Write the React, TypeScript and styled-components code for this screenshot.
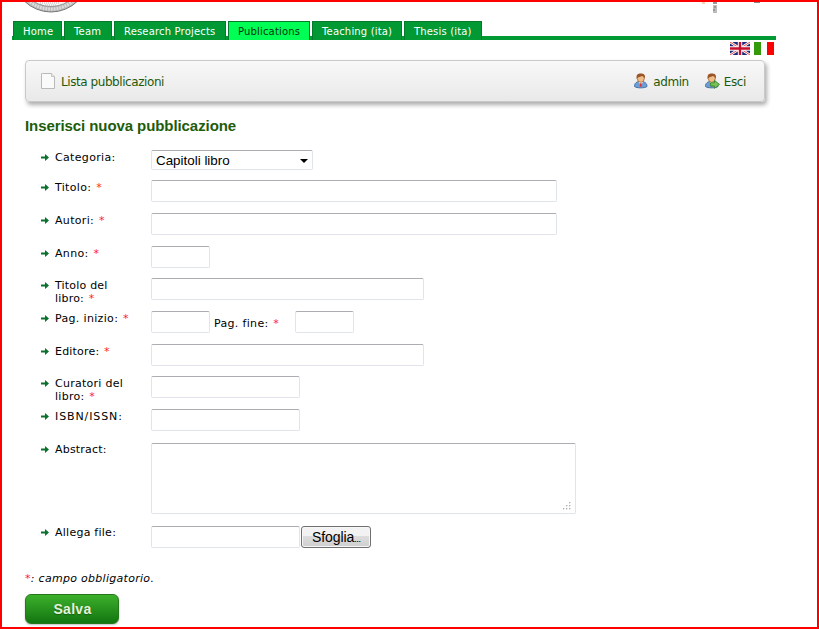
import React from "react";
import styled, { createGlobalStyle } from "styled-components";

const Global = createGlobalStyle`
  *, *::before, *::after { box-sizing: border-box; }
  body { margin: 0; background: #fff; }
`;

const Page = styled.div`
  width: 819px;
  height: 629px;
  border: 2px solid #f00;
  overflow: hidden;
  font: 11px/13px "DejaVu Sans", Verdana, sans-serif;
  color: #000;
  display: flex;
  flex-direction: column;
`;

const Header = styled.header`
  height: 19px;
  flex: none;
  display: flex;
  justify-content: space-between;
  padding: 0 53px 0 20px;
  svg { display: block; }
`;

const TabBar = styled.nav`
  height: 19px;
  width: 764px;
  flex: none;
  margin-left: 10px;
  padding-left: 1px;
  display: flex;
  gap: 2px;
  background: linear-gradient(#093, #093) bottom / 100% 4px no-repeat;
`;

const Tab = styled.a<{ $w: number; $active?: boolean }>`
  width: ${(p) => p.$w}px;
  height: 19px;
  padding: 3px 0 0 9px;
  white-space: nowrap;
  border: 1px solid #067a2b;
  border-bottom: 0;
  background: ${(p) => (p.$active ? "#00ff55" : "#009933")};
  color: ${(p) => (p.$active ? "#003311" : "#fff")};
  font-size: 10px;
  letter-spacing: 0.17px;
`;

const Flags = styled.div`
  height: 20px;
  flex: none;
  display: flex;
  gap: 4px;
  padding: 2px 0 0 728px;
  svg { display: block; }
`;

const Toolbar = styled.div`
  width: 740px;
  height: 42px;
  flex: none;
  margin-left: 23px;
  padding: 1px 18px 0 15px;
  display: flex;
  align-items: center;
  border: 1px solid #c9c9c9;
  border-radius: 4px;
  background: linear-gradient(#f8f8f8, #e9e9e9);
  box-shadow: 2px 3px 4px rgba(0, 0, 0, 0.32);
`;

const ToolLink = styled.a<{ $gap: number; $ls: number; $end?: number }>`
  display: flex;
  align-items: center;
  gap: ${(p) => p.$gap}px;
  margin-right: ${(p) => p.$end ?? 0}px;
  color: #1f5a0c;
  font-size: 12px;
  line-height: 16px;
  letter-spacing: ${(p) => p.$ls}px;
  white-space: nowrap;
  svg { margin-bottom: 2px; }
`;

const Spacer = styled.span`
  flex: 1;
`;

const Title = styled.h1`
  margin: 14px 0 0 23px;
  height: 34px;
  flex: none;
  color: #1d5c0b;
  font: bold 15px/20px "Liberation Sans", Arial, sans-serif;
  letter-spacing: -0.08px;
`;

const Form = styled.form`
  display: flex;
  flex-direction: column;
  padding-left: 38px;
`;

const Row = styled.div<{ $h: number }>`
  height: ${(p) => p.$h}px;
  display: grid;
  grid-template-columns: 15px 96px 1fr;
  align-items: start;
`;

const Arrow = styled.svg<{ $top: number }>`
  display: block;
  margin: ${(p) => p.$top + 3}px 0 0 1px;
`;

const Label = styled.label<{ $top: number; $ls: number }>`
  width: 80px;
  padding-top: ${(p) => p.$top}px;
  letter-spacing: ${(p) => p.$ls}px;
`;

const Star = styled.span`
  color: #f22;
  margin-left: 1px;
`;

const Fields = styled.div`
  display: flex;
`;

const edge = `
  border: 1px solid #e1e4eb;
  border-top-color: #abadb3;
  border-radius: 2px;
  background: #fff;
  padding: 0 4px;
  outline: none;
`;

const Input = styled.input<{ $w: number }>`
  ${edge}
  width: ${(p) => p.$w}px;
  height: 22px;
`;

const Select = styled.div`
  ${edge}
  width: 162px;
  height: 20px;
  display: flex;
  align-items: center;
  justify-content: space-between;
  font: 13.4px/18px "Liberation Sans", Arial, sans-serif;
  padding-top: 1px;
`;

const Area = styled.div`
  ${edge}
  width: 425px;
  height: 71px;
  display: flex;
  align-items: flex-end;
  justify-content: flex-end;
  padding: 0 4px 3px;
`;

const Inline = styled.span`
  width: 85px;
  padding: 6px 0 0 4px;
  letter-spacing: 0.33px;
`;

const Browse = styled.button`
  width: 70px;
  height: 22px;
  margin-left: 1px;
  padding: 0 0 0 10px;
  text-align: left;
  border: 1px solid #707070;
  border-radius: 3px;
  background: linear-gradient(#f2f2f2 0 45%, #dddddd 46%, #cfcfcf);
  box-shadow: inset 0 0 0 1px #f6f6f6;
  color: #000;
  font: 14px/20px "Liberation Sans", Arial, sans-serif;
  letter-spacing: -0.1px;
`;

const Dots = styled.span`
  font-size: 7px;
  font-weight: bold;
`;

const Note = styled.p`
  margin: 11px 0 0 23px;
  height: 13px;
  font-style: italic;
  letter-spacing: 0.29px;
`;

const NoteStar = styled.span`
  color: #f22;
`;

const Save = styled.button`
  width: 94px;
  height: 30px;
  flex: none;
  margin: 9px 0 0 23px;
  padding: 0 0 0 1px;
  border: 1px solid #23781a;
  border-radius: 6px;
  background: linear-gradient(#3cb02c, #137510);
  box-shadow: 0 1px 2px rgba(0, 0, 0, 0.25);
  color: #e2f3dc;
  font: bold 14px/28px "Liberation Sans", Arial, sans-serif;
  letter-spacing: 0.3px;
  text-shadow: 0 1px 1px rgba(0, 0, 0, 0.3);
`;

const Seal = () => (
  <svg width="60" height="12" viewBox="22 2 60 12">
    <circle cx="51" cy="-26" r="38" fill="#b9b9b9" stroke="#777" />
    <circle cx="51" cy="-26" r="35" fill="none" stroke="#dedede" strokeWidth="3" strokeDasharray="1.7 1.1" />
    <circle cx="51" cy="-26" r="32.5" fill="#f5f5f5" stroke="#999" />
    <path d="M40 3h20M45 5h12" stroke="#bbb" strokeDasharray="1 1" />
  </svg>
);

const Statue = () => (
  <svg width="64" height="12" viewBox="700 2 64 12" shapeRendering="crispEdges">
    <path d="M702 2h3v2h-3z" fill="#f6cfb0" />
    <path d="M713 2h4v2h-4z" fill="#999" />
    <path d="M713 5h4v8h-4z" fill="#bdbdbd" />
    <path d="M714 6h2v2h-2zM713 9h2v2h-2z" fill="#999" />
    <path d="M754 2h6v1h-6z" fill="#888" />
  </svg>
);

const Uk = () => (
  <svg width="20" height="13">
    <rect width="20" height="13" fill="#1d2a78" />
    <path d="M0 0l20 13M20 0L0 13" stroke="#fff" strokeWidth="2.6" />
    <path d="M0 0l20 13M20 0L0 13" stroke="#d22" strokeWidth=".8" />
    <path d="M10 0v13M0 6.5h20" stroke="#fff" strokeWidth="4.4" />
    <path d="M10 0v13M0 6.5h20" stroke="#c8102e" strokeWidth="2.4" />
  </svg>
);

const Italy = () => (
  <svg width="20" height="13">
    <rect width="20" height="13" fill="#fff" />
    <rect width="7" height="13" fill="#339a0c" />
    <rect x="13" width="7" height="13" fill="#f00" />
  </svg>
);

const Doc = () => (
  <svg width="16" height="16" viewBox="0 0 16 16">
    <path d="M1.5.5h9l3 3v12h-13v-15z" fill="#fafafa" stroke="#b9b9b9" />
    <path d="M10.5.5v3h3" fill="#eee" stroke="#c4c4c4" />
  </svg>
);

const Person = ({ exit }: { exit?: boolean }) => (
  <svg width="16" height="16" viewBox="0 0 16 16">
    <path d="M1.5 13.5c0-3.5 2-5 6-5s6.500 1.500 6.500 5c-2 1.800-10.500 1.800-12.500 0z" fill="#6e9fd4" stroke="#4370a8" />
    <path d="M5.500 9l2.300 2.600L10.200 9z" fill="#fff" />
    <path d="M7.300 10h1l.6 3-1.100 1-1.100-1z" fill="#d33" />
    <ellipse cx="7.8" cy="5.3" rx="3.5" ry="4" fill="#efbd8c" stroke="#a9672f" strokeWidth=".8" />
    <path d="M3.600 6C3 1.500 5 .4 7.800.4S12.600 1.500 12 6c-.5-2-1.500-2.500-3-3-1.200 1-4 .5-5.400 3z" fill="#9a5526" />
    {exit && <path d="M6.500 9.800h4V7.400l5 4-5 4V13h-4z" fill="#78c256" stroke="#3b8a2b" strokeWidth=".9" />}
  </svg>
);

const rows: { label: string; req?: boolean; h: number; w: number; kind?: string; top?: number; ls?: number }[] = [
  { label: "Categoria:", h: 30, w: 162, kind: "select" },
  { label: "Titolo:", req: true, h: 33, w: 406 },
  { label: "Autori:", req: true, h: 33, w: 406 },
  { label: "Anno:", req: true, h: 32, w: 59 },
  { label: "Titolo del libro:", req: true, h: 33, w: 273, ls: 0.2 },
  { label: "Pag. inizio:", req: true, h: 33, w: 59, kind: "pages" },
  { label: "Editore:", req: true, h: 32, w: 273, ls: 0.2 },
  { label: "Curatori del libro:", req: true, h: 33, w: 149, ls: 0.27 },
  { label: "ISBN/ISSN:", h: 34, w: 149, ls: 0.9 },
  { label: "Abstract:", h: 83, w: 425, kind: "area", top: 0, ls: 0.2 },
  { label: "Allega file:", h: 35, w: 149, kind: "file", top: 0, ls: 0.25 },
];

const Control = ({ kind, w }: { kind?: string; w: number }) => {
  if (kind === "select")
    return (
      <Select>
        Capitoli libro
        <svg width="8" height="4">
          <path d="M0 0h8L4 4z" fill="#000" />
        </svg>
      </Select>
    );
  if (kind === "area")
    return (
      <Area>
        <svg width="9" height="9" viewBox="0 0 9 9" shapeRendering="crispEdges">
          <path d="M7 1h1v1h-1zM4 4h1v1h-1zM7 4h1v1h-1zM1 7h1v1h-1zM4 7h1v1h-1zM7 7h1v1h-1z" fill="#888" stroke="#bbb" strokeWidth=".5" />
        </svg>
      </Area>
    );
  return (
    <>
      <Input $w={w} />
      {kind === "pages" && (
        <>
          <Inline>
            Pag. fine: <Star>*</Star>
          </Inline>
          <Input $w={59} />
        </>
      )}
      {kind === "file" && (
        <Browse type="button">
          Sfoglia<Dots>…</Dots>
        </Browse>
      )}
    </>
  );
};

export default function App() {
  return (
    <Page>
      <Global />
      <Header>
        <Seal />
        <Statue />
      </Header>
      <TabBar>
        <Tab $w={49}>Home</Tab>
        <Tab $w={48}>Team</Tab>
        <Tab $w={112}>Research Projects</Tab>
        <Tab $w={82} $active>Publications</Tab>
        <Tab $w={90}>Teaching (ita)</Tab>
        <Tab $w={78}>Thesis (ita)</Tab>
      </TabBar>
      <Flags>
        <Uk />
        <Italy />
      </Flags>
      <Toolbar>
        <ToolLink $gap={4} $ls={-0.43}>
          <Doc />
          Lista pubblicazioni
        </ToolLink>
        <Spacer />
        <ToolLink $gap={4} $ls={-0.4} $end={15}>
          <Person />
          admin
        </ToolLink>
        <ToolLink $gap={4} $ls={-0.4}>
          <Person exit />
          Esci
        </ToolLink>
      </Toolbar>
      <Title>Inserisci nuova pubblicazione</Title>
      <Form>
        {rows.map((r) => (
          <Row key={r.label} $h={r.h}>
            <Arrow $top={r.top ?? 1} width="8" height="7" viewBox="0 0 8 7">
              <path d="M0 2.5h4V0l4 3.5L4 7V4.5H0z" fill="#0a702c" />
            </Arrow>
            <Label $top={r.top ?? 1} $ls={r.ls ?? 0.33}>
              {r.label} {r.req && <Star>*</Star>}
            </Label>
            <Fields>
              <Control kind={r.kind} w={r.w} />
            </Fields>
          </Row>
        ))}
      </Form>
      <Note>
        <NoteStar>*</NoteStar>: campo obbligatorio.
      </Note>
      <Save type="button">Salva</Save>
    </Page>
  );
}
